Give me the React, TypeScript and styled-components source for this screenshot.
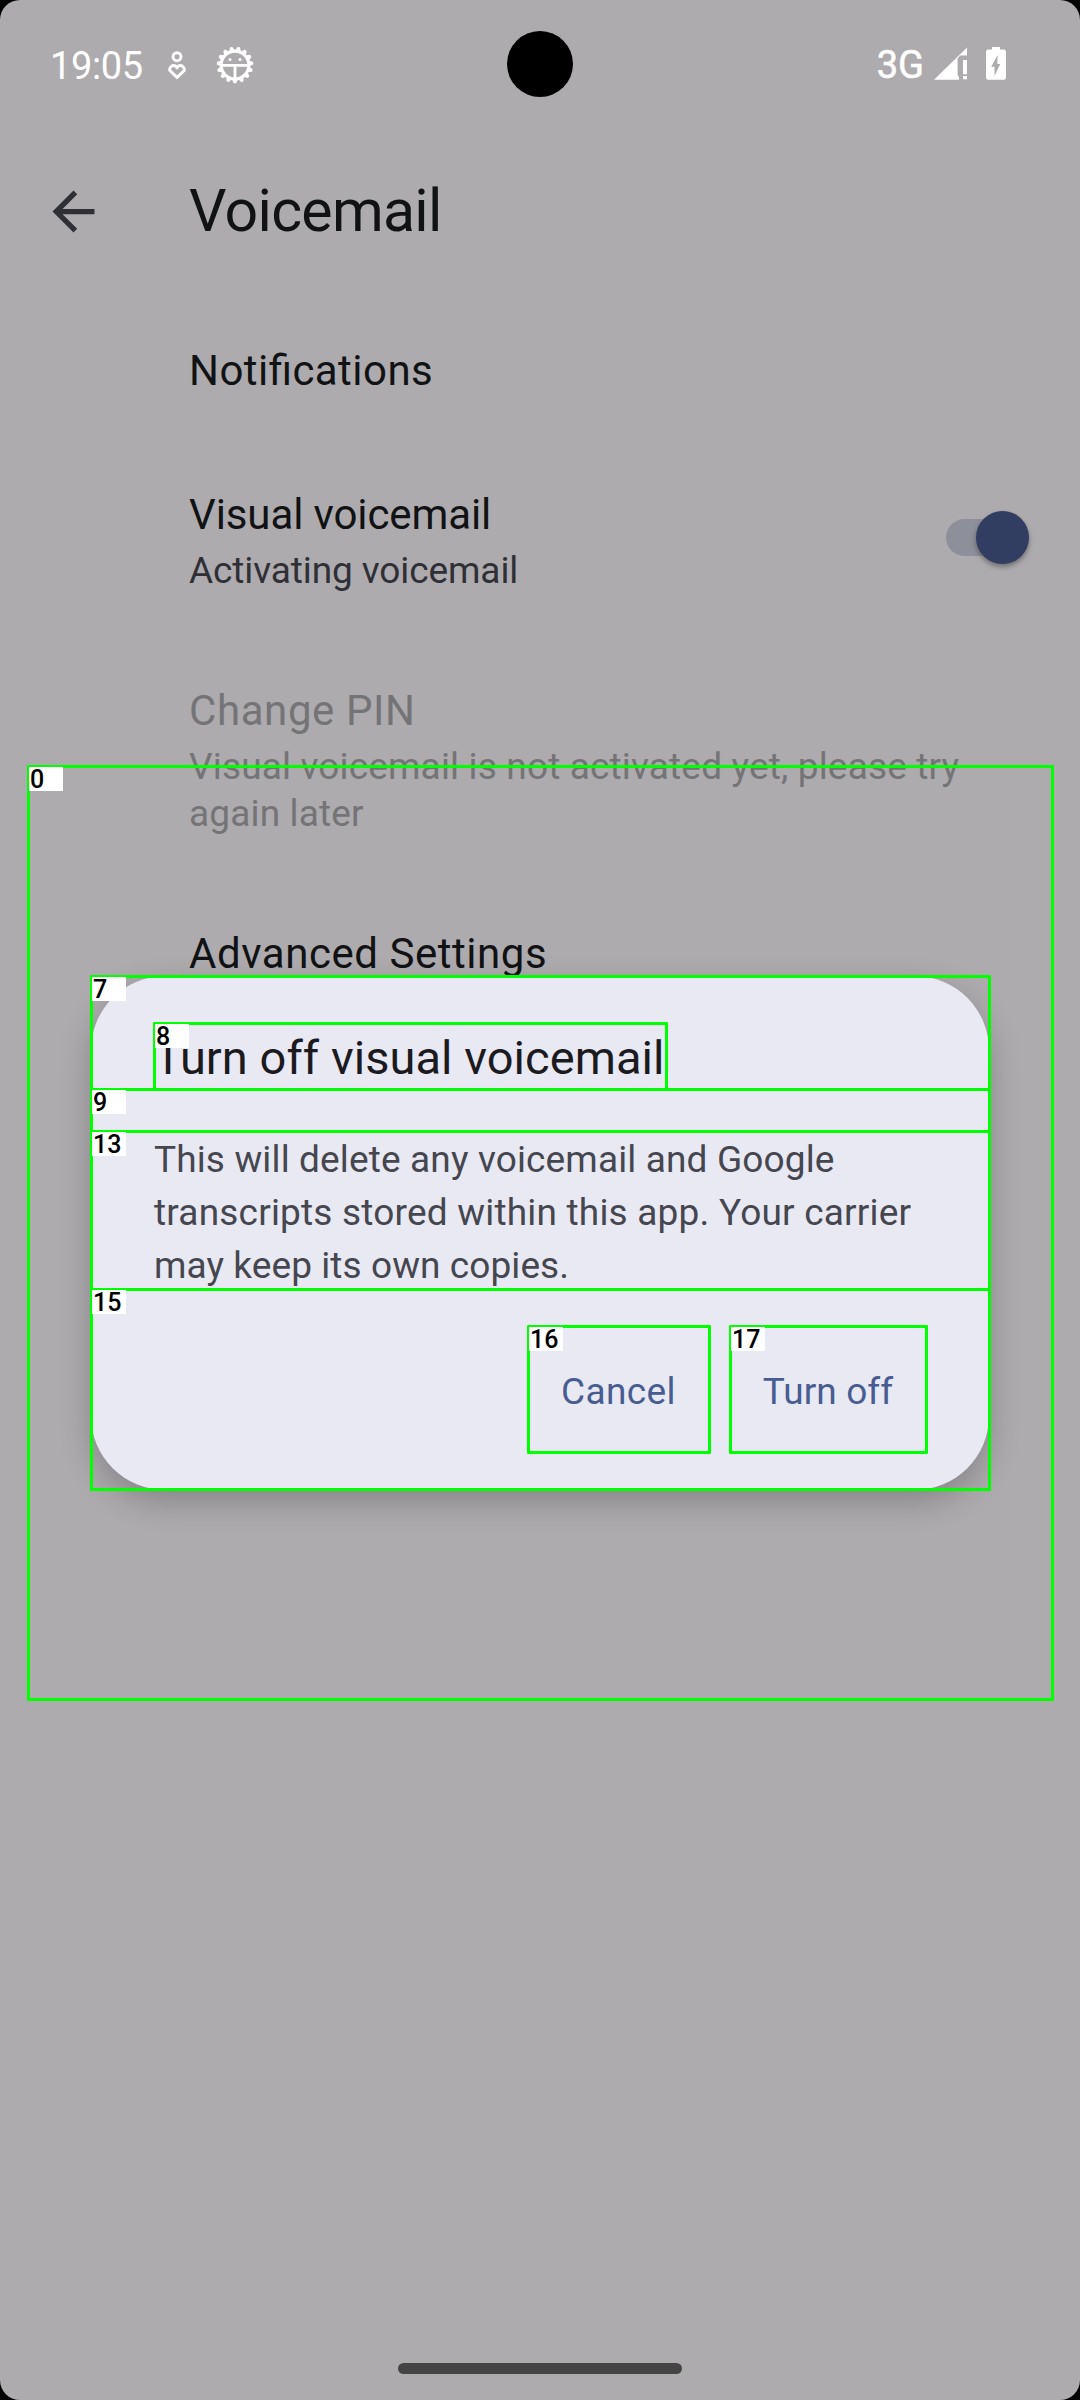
import React from "react";
import styled, { createGlobalStyle } from "styled-components";

const GlobalStyle = createGlobalStyle`
  *, *::before, *::after { box-sizing: border-box; }
  html, body { margin: 0; padding: 0; background: #000; }
  body {
    font-family: Roboto, "Noto Sans", sans-serif;
    font-feature-settings: "liga" 1;
  }
`;

const Screen = styled.div`
  position: relative;
  width: 1080px;
  height: 2400px;
  display: flex;
  flex-direction: column;
  background: #adabad;
  border-radius: 20px;
  overflow: hidden;
`;

const StatusBar = styled.header`
  display: flex;
  align-items: center;
  justify-content: space-between;
  height: 132px;
  padding: 0 74px 0 50px;
  color: #fff;
`;

const StatusGroup = styled.div`
  display: flex;
  align-items: center;
`;

const Clock = styled.span`
  width: 115px;
  font-size: 38px;
  line-height: 46px;
  letter-spacing: -0.4px;
`;

const Network = styled.span`
  font-size: 38px;
  line-height: 44px;
  -webkit-text-stroke: 0.6px #fff;
  margin: -3px 10px 0 0;
`;

const HeartIcon = styled.svg`
  width: 24px;
  height: 32px;
  margin-right: 26px;
`;

const GearIcon = styled.svg`
  width: 40px;
  height: 40px;
  margin-top: -2px;
`;

const SignalIcon = styled.svg`
  width: 34px;
  height: 34px;
  margin: -4px 18px 0 0;
`;

const BatteryIcon = styled.svg`
  width: 20px;
  height: 34px;
  margin-top: -4px;
`;

const Camera = styled.div`
  position: absolute;
  top: 31px;
  left: 507px;
  width: 66px;
  height: 66px;
  border-radius: 50%;
  background: #000;
`;

const AppBar = styled.div`
  display: flex;
  align-items: center;
  height: 158px;
  padding-left: 42px;
`;

const BackIcon = styled.svg`
  width: 63px;
  height: 63px;
  margin-right: 84px;
  fill: #2f3036;
`;

const PageTitle = styled.h1<{ $ls?: number }>`
  margin: 0;
  font-size: 59px;
  font-weight: 400;
  line-height: 70px;
  letter-spacing: ${(p) => p.$ls ?? 0}px;
  color: #111214;
`;

const Settings = styled.main`
  flex: 1;
  display: flex;
  flex-direction: column;
  padding: 11px 51px 0 189px;
`;

const Row = styled.section<{ $minHeight?: number; $disabled?: boolean }>`
  display: flex;
  justify-content: space-between;
  align-items: flex-start;
  min-height: ${(p) => p.$minHeight ?? 0}px;
  padding: 46px 0 47px;
  color: ${(p) => (p.$disabled ? "#747477" : "#111214")};
`;

const RowText = styled.div`
  display: flex;
  flex-direction: column;
  gap: 8px;
  white-space: nowrap;
`;

const RowTitle = styled.div<{ $ls?: number }>`
  font-size: 42px;
  line-height: 48px;
  letter-spacing: ${(p) => p.$ls ?? 0}px;
`;

const Summary = styled.div<{ $ls?: number; $disabled?: boolean }>`
  font-size: 37px;
  line-height: 47px;
  letter-spacing: ${(p) => p.$ls ?? 0}px;
  color: ${(p) => (p.$disabled ? "#747477" : "#2f3036")};
`;

const Switch = styled.div`
  display: flex;
  align-items: center;
  justify-content: flex-end;
  width: 83px;
  height: 37px;
  margin-top: 28px;
  border-radius: 19px;
  background: #8d8f9b;
`;

const Thumb = styled.div`
  width: 53px;
  height: 53px;
  flex: none;
  border-radius: 50%;
  background: #313d61;
  box-shadow: 0 3px 5px rgba(0, 0, 0, 0.35);
`;

const NavArea = styled.footer`
  display: flex;
  justify-content: center;
  height: 37px;
`;

const NavHandle = styled.div`
  width: 284px;
  height: 11px;
  border-radius: 6px;
  background: #444;
`;

const Dialog = styled.div`
  position: absolute;
  top: 976px;
  left: 91px;
  width: 898px;
  height: 514px;
  display: flex;
  flex-direction: column;
  padding: 48px 63px 0;
  border-radius: 74px;
  background: #e9e9f3;
  box-shadow: 0 12px 32px rgba(0, 0, 0, 0.22);
`;

const DialogTitle = styled.h2<{ $ls?: number }>`
  margin: 0 0 42px;
  font-size: 47px;
  font-weight: 400;
  line-height: 67px;
  letter-spacing: ${(p) => p.$ls ?? 0}px;
  color: #1b1b1f;
`;

const DialogLine = styled.div<{ $ls?: number }>`
  font-size: 37px;
  line-height: 53px;
  letter-spacing: ${(p) => p.$ls ?? 0}px;
  white-space: nowrap;
  color: #45464f;
`;

const DialogActions = styled.div`
  display: flex;
  justify-content: flex-end;
  gap: 22px;
  margin: 36px 0 0;
`;

const DialogButton = styled.button<{ $width: number; $ls?: number }>`
  width: ${(p) => p.$width}px;
  height: 126px;
  padding: 0;
  border: 0;
  background: none;
  font-family: inherit;
  font-feature-settings: inherit;
  font-size: 37px;
  letter-spacing: ${(p) => p.$ls ?? 0}px;
  white-space: nowrap;
  color: #475d92;
`;

type Box = { id: string; x: number; y: number; w: number; h: number };

const Outline = styled.div<{ $box: Box }>`
  position: absolute;
  left: ${(p) => p.$box.x}px;
  top: ${(p) => p.$box.y}px;
  width: ${(p) => p.$box.w}px;
  height: ${(p) => p.$box.h}px;
  border: 3px solid #0f0;
  border-radius: 1px;
`;

const Tag = styled.span<{ $box: Box }>`
  position: absolute;
  left: ${(p) => p.$box.x + 2}px;
  top: ${(p) => p.$box.y + 2}px;
  width: 34px;
  height: 24px;
  padding-left: 1px;
  background: #fff;
  color: #000;
  font-size: 25px;
  font-weight: 500;
  line-height: 26px;
`;

const boxes: Box[] = [
  { id: "0", x: 27, y: 765, w: 1027, h: 936 },
  { id: "7", x: 90, y: 975, w: 901, h: 516 },
  { id: "8", x: 153, y: 1022, w: 515, h: 69 },
  { id: "9", x: 90, y: 1088, w: 901, h: 45 },
  { id: "13", x: 90, y: 1130, w: 901, h: 161 },
  { id: "15", x: 90, y: 1288, w: 901, h: 203 },
  { id: "16", x: 527, y: 1325, w: 184, h: 129 },
  { id: "17", x: 729, y: 1325, w: 199, h: 129 },
];

const teeth = Array.from({ length: 15 }, (_, i) => i * 24);

export default function App() {
  return (
    <>
      <GlobalStyle />
      <Screen>
        <StatusBar>
          <StatusGroup>
            <Clock>19:05</Clock>
            <HeartIcon viewBox="165 49 24 32" fill="none" stroke="#fff" strokeWidth="2.9">
              <circle cx="177" cy="55.7" r="4" />
              <path d="M177 76.4 L169.8 69.6 A4.1 4.1 0 0 1 175.4 64.9 L177 66.6 L178.6 64.9 A4.1 4.1 0 0 1 184.2 69.6 Z" />
            </HeartIcon>
            <GearIcon viewBox="-20 -20 40 40" fill="none" stroke="#fff">
              <circle r="13.8" strokeWidth="3" />
              {teeth.map((a) => (
                <path
                  key={a}
                  d="M-2.3 14.4 L-0.8 17.7 L0.8 17.7 L2.3 14.4 Z"
                  fill="#fff"
                  strokeWidth="1.2"
                  strokeLinejoin="round"
                  transform={`rotate(${a})`}
                />
              ))}
              <path d="M-13 0.4 H13 M0 0.4 V13" strokeWidth="2.8" />
              <circle cx="-5" cy="-5.6" r="1.5" fill="#fff" stroke="none" />
              <circle cx="5" cy="-5.6" r="1.5" fill="#fff" stroke="none" />
            </GearIcon>
          </StatusGroup>
          <StatusGroup>
            <Network>3G</Network>
            <SignalIcon viewBox="934 47 34 34" fill="#fff">
              <path d="M934 79.8 L967 47.5 V55.5 H960 L957.6 58.5 V75 L959 77 V79.8 Z" />
              <path d="M963 60 H967 V74.3 H963 Z M963 76 H967 V79.2 H963 Z" />
            </SignalIcon>
            <BatteryIcon viewBox="986 47 20 34" fill="#fff" fillRule="evenodd">
              <path d="M992 47 H1000 V49.5 H1004.5 L1006 51 V78.3 L1004.5 79.8 H987.5 L986 78.3 V51 L987.5 49.5 H992 Z M997.6 55 L991.3 66.7 H994.5 V76 L1000.2 64 H997.3 Z" />
            </BatteryIcon>
          </StatusGroup>
        </StatusBar>
        <AppBar>
          <BackIcon viewBox="0 0 24 24">
            <path d="M20 11H7.83l5.59-5.59L12 4l-8 8 8 8 1.41-1.41L7.83 13H20v-2z" />
          </BackIcon>
          <PageTitle $ls={-0.7}>Voicemail</PageTitle>
        </AppBar>
        <Settings>
          <Row $minHeight={144}>
            <RowTitle $ls={0.45}>Notifications</RowTitle>
          </Row>
          <Row>
            <RowText>
              <RowTitle $ls={-0.1}>Visual voicemail</RowTitle>
              <Summary $ls={-0.1}>Activating voicemail</Summary>
            </RowText>
            <Switch>
              <Thumb />
            </Switch>
          </Row>
          <Row $disabled>
            <RowText>
              <RowTitle $ls={0.6}>Change PIN</RowTitle>
              <Summary $disabled $ls={0.16}>
                Visual voicemail is not activated yet, please try
                <br />
                again later
              </Summary>
            </RowText>
          </Row>
          <Row>
            <RowTitle $ls={0.55}>Advanced Settings</RowTitle>
          </Row>
        </Settings>
        <NavArea>
          <NavHandle />
        </NavArea>
        <Camera />
        <Dialog role="dialog">
          <DialogTitle $ls={0.05}>Turn off visual voicemail</DialogTitle>
          <DialogLine $ls={0.14}>This will delete any voicemail and Google</DialogLine>
          <DialogLine $ls={0.2}>transcripts stored within this app. Your carrier</DialogLine>
          <DialogLine $ls={0.08}>may keep its own copies.</DialogLine>
          <DialogActions>
            <DialogButton $width={179} $ls={0.4}>
              Cancel
            </DialogButton>
            <DialogButton $width={196} $ls={0.1}>
              Turn off
            </DialogButton>
          </DialogActions>
        </Dialog>
        {boxes.map((b) => (
          <Outline key={b.id} $box={b} />
        ))}
        {boxes.map((b) => (
          <Tag key={b.id} $box={b}>
            {b.id}
          </Tag>
        ))}
      </Screen>
    </>
  );
}
